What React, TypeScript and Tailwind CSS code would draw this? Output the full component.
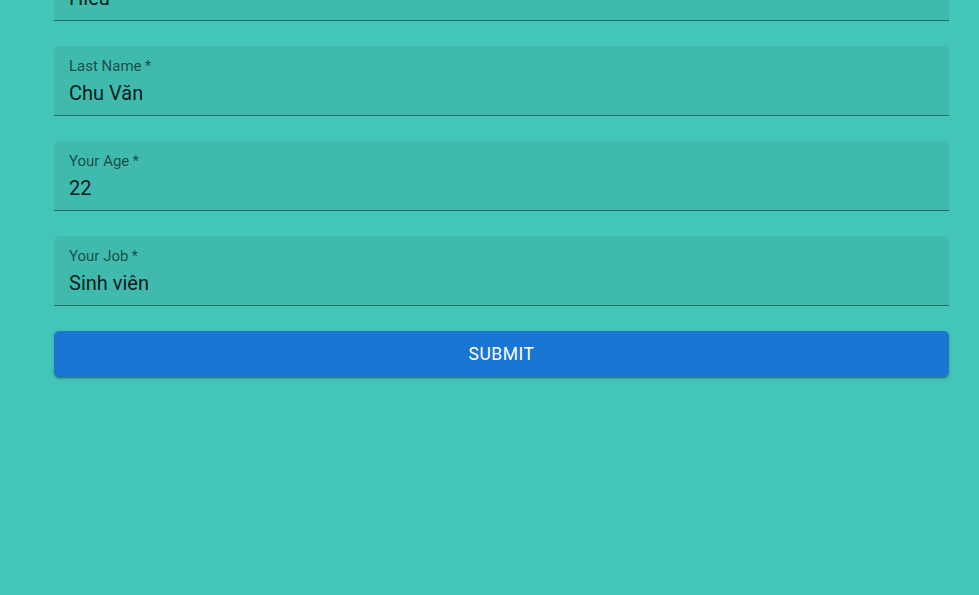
import React from 'react';

const fields = [
  { label: 'First Name', value: 'Hiếu' },
  { label: 'Last Name', value: 'Chu Văn' },
  { label: 'Your Age', value: '22' },
  { label: 'Your Job', value: 'Sinh viên' },
];

function FilledField({ label, value }: { label: string; value: string }) {
  return (
    <div className="h-[70px] rounded-t-[5px] bg-black/[0.06] border-b border-black/[0.42] px-[15px] pt-[9px]">
      <div className="h-[22px] text-[15px] leading-[22px] text-black/60">
        {label}
        {'\u2009*'}
      </div>
      <div className="mt-[2px] h-[29px] text-[20px] leading-[29px] text-black/[0.87]">{value}</div>
    </div>
  );
}

export default function App() {
  return (
    <div
      className="h-[595px] overflow-hidden bg-[#43c6b8]"
      style={{ fontFamily: 'Roboto, "Noto Sans", sans-serif' }}
    >
      <form className="-mt-[49px] pl-[54px] pr-[30px] flex flex-col gap-[25px]">
        {fields.map((f) => (
          <FilledField key={f.label} label={f.label} value={f.value} />
        ))}
        <button
          type="button"
          className="h-[46px] w-full rounded-[5px] bg-[#1976d2] text-white text-[17.5px] font-normal tracking-[0.02857em] uppercase shadow-[0px_3px_1px_-2px_rgba(0,0,0,0.2),0px_2px_2px_0px_rgba(0,0,0,0.14),0px_1px_5px_0px_rgba(0,0,0,0.12)]"
        >
          Submit
        </button>
      </form>
    </div>
  );
}
